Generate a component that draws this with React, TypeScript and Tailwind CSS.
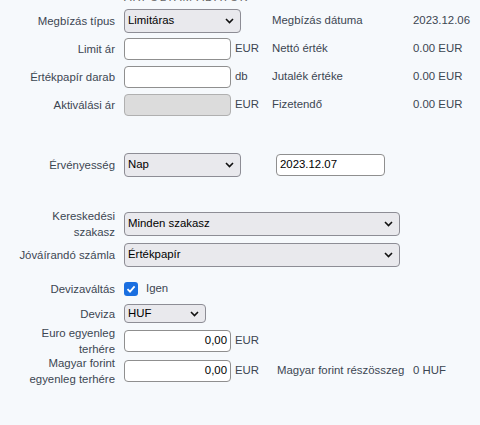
import React from "react";

const Chevron = () => (
  <svg width="9" height="6" viewBox="0 0 9 6" className="shrink-0">
    <path d="M1 1 L4.5 4.5 L8 1" fill="none" stroke="#111" strokeWidth="1.6" />
  </svg>
);

function Select({ value, w, h = 24 }: { value: string; w: number; h?: number }) {
  return (
    <div
      className="flex items-center justify-between rounded-[4px] border border-[#8d8d95] bg-[#e9e9ed] pl-[3px] pr-[6px] text-black"
      style={{ width: w, height: h }}
    >
      <span>{value}</span>
      <Chevron />
    </div>
  );
}

function Input({ w = 107, value = "", disabled = false, right = false }: { w?: number; value?: string; disabled?: boolean; right?: boolean }) {
  return (
    <div
      className={`flex h-[22px] items-center rounded-[4px] border border-[#8f8f8f] px-[3px] text-black ${disabled ? "bg-[#dcdcdc] border-[#b0b0b0]" : "bg-white"} ${right ? "justify-end" : ""}`}
      style={{ width: w }}
    >
      {value}
    </div>
  );
}

const Label = ({ children }: { children: React.ReactNode }) => (
  <div className="w-[115px] shrink-0 text-right leading-[16px] text-[#3c4652]">{children}</div>
);

export default function App() {
  return (
    <div
      className="min-h-[425px] w-[480px] bg-[#f6f9fc] text-[11.4px] text-[#3c4652]"
      style={{ fontFamily: '"Liberation Sans", Arial, sans-serif' }}
    >
      <div className="flex h-[3px] items-end overflow-hidden pl-[124px]">
        <span className="leading-none tracking-[1px] text-[#666]">ÁRFOLYAM ADATOK</span>
      </div>
      <div className="pt-[4px]">
        <div className="flex h-[28px] items-center">
          <Label>Megbízás típus</Label>
          <div className="ml-[9px] w-[148px]">
            <Select value="Limitáras" w={117} />
          </div>
          <div className="w-[141px]">Megbízás dátuma</div>
          <div>2023.12.06</div>
        </div>
        <div className="flex h-[28px] items-center">
          <Label>Limit ár</Label>
          <div className="ml-[9px] flex w-[148px] items-center gap-[4px]">
            <Input />
            <span>EUR</span>
          </div>
          <div className="w-[141px]">Nettó érték</div>
          <div>0.00 EUR</div>
        </div>
        <div className="flex h-[28px] items-center">
          <Label>Értékpapír darab</Label>
          <div className="ml-[9px] flex w-[148px] items-center gap-[4px]">
            <Input />
            <span>db</span>
          </div>
          <div className="w-[141px]">Jutalék értéke</div>
          <div>0.00 EUR</div>
        </div>
        <div className="flex h-[28px] items-center">
          <Label>Aktiválási ár</Label>
          <div className="ml-[9px] flex w-[148px] items-center gap-[4px]">
            <Input disabled />
            <span>EUR</span>
          </div>
          <div className="w-[141px]">Fizetendő</div>
          <div>0.00 EUR</div>
        </div>

        <div className="mt-[34px] flex h-[24px] items-center">
          <Label>Érvényesség</Label>
          <div className="ml-[9px]">
            <Select value="Nap" w={117} />
          </div>
          <div className="ml-[35px]">
            <Input w={109} value="2023.12.07" />
          </div>
        </div>

        <div className="mt-[35px] flex h-[24px] items-center">
          <Label>
            Kereskedési
            <br />
            szakasz
          </Label>
          <div className="ml-[9px]">
            <Select value="Minden szakasz" w={276} />
          </div>
        </div>
        <div className="mt-[7px] flex h-[24px] items-center">
          <Label>Jóváírandó számla</Label>
          <div className="ml-[9px]">
            <Select value="Értékpapír" w={276} />
          </div>
        </div>

        <div className="mt-[15px] flex h-[14px] items-center">
          <Label>Devizaváltás</Label>
          <div className="ml-[9px] flex items-center">
            <div className="flex h-[14px] w-[14px] items-center justify-center rounded-[3px] bg-[#1a6fe0]">
              <svg width="10" height="10" viewBox="0 0 10 10">
                <path d="M1.5 5.2 L4 7.6 L8.6 2.4" fill="none" stroke="#fff" strokeWidth="1.8" />
              </svg>
            </div>
            <span className="ml-[8px]">Igen</span>
          </div>
        </div>
        <div className="mt-[8px] flex h-[19px] items-center">
          <Label>Deviza</Label>
          <div className="ml-[9px]">
            <Select value="HUF" w={82} h={19} />
          </div>
        </div>
        <div className="mt-[3px] flex h-[30px] items-center">
          <Label>
            Euro egyenleg
            <br />
            terhére
          </Label>
          <div className="ml-[9px] flex items-center gap-[4px]">
            <Input value="0,00" right />
            <span>EUR</span>
          </div>
        </div>
        <div className="flex h-[30px] items-center">
          <Label>
            Magyar forint
            <br />
            egyenleg terhére
          </Label>
          <div className="ml-[9px] flex w-[153px] items-center gap-[4px]">
            <Input value="0,00" right />
            <span>EUR</span>
          </div>
          <div className="w-[136px]">Magyar forint részösszeg</div>
          <div>0 HUF</div>
        </div>
      </div>
    </div>
  );
}
